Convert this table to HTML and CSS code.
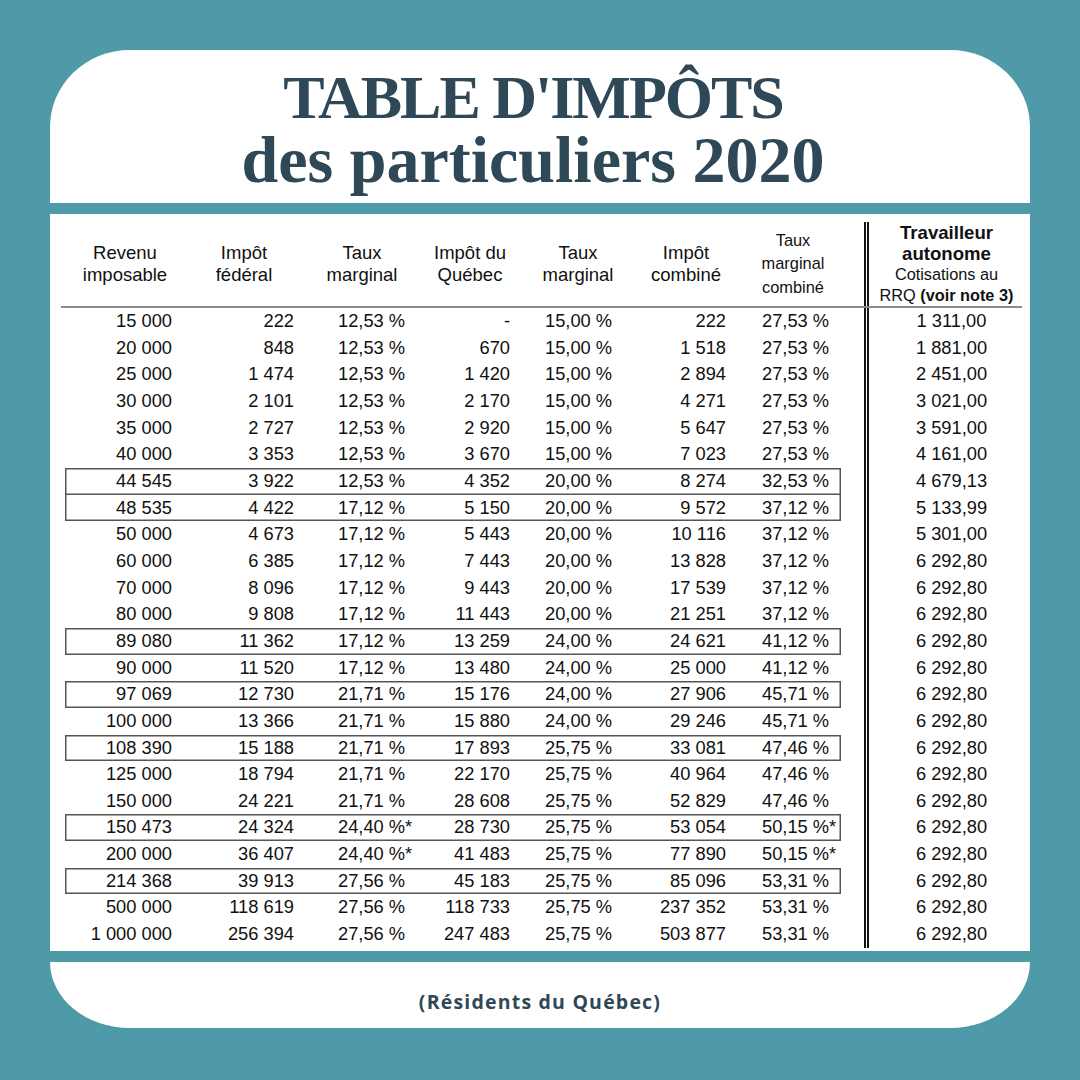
FILE: index.html
```html
<!DOCTYPE html>
<html lang="fr">
<head>
<meta charset="utf-8">
<title>Table d'impôts des particuliers 2020</title>
<link rel="stylesheet" href="styles.css">
</head>
<body>
<div class="page">
  <header class="title-card">
    <h1 class="title">
      <span class="title-l1">TABLE D'IMPÔTS</span>
      <span class="title-l2">des particuliers 2020</span>
    </h1>
  </header>

  <section class="sheet">
    <div class="tbl">
      <div class="row head">
        <div class="main">
          <div class="h c1"><span>Revenu</span><span>imposable</span></div>
          <div class="h c2"><span>Impôt</span><span>fédéral</span></div>
          <div class="h c3"><span>Taux</span><span>marginal</span></div>
          <div class="h c4"><span>Impôt du</span><span>Québec</span></div>
          <div class="h c5"><span>Taux</span><span>marginal</span></div>
          <div class="h c6"><span>Impôt</span><span>combiné</span></div>
          <div class="h c7 small"><span>Taux</span><span>marginal</span><span>combiné</span></div>
        </div>
        <div class="sep"></div>
        <div class="h c8 autonome">
          <span class="b">Travailleur</span>
          <span class="b">autonome</span>
          <span class="s">Cotisations au</span>
          <span class="s">RRQ <b>(voir note 3)</b></span>
        </div>
      </div>

      <div class="row"><div class="main"><div class="d c1">15 000</div><div class="d c2">222</div><div class="d c3">12,53 %</div><div class="d c4">-</div><div class="d c5">15,00 %</div><div class="d c6">222</div><div class="d c7">27,53 %</div></div><div class="sep"></div><div class="d c8">1 311,00</div></div>
      <div class="row"><div class="main"><div class="d c1">20 000</div><div class="d c2">848</div><div class="d c3">12,53 %</div><div class="d c4">670</div><div class="d c5">15,00 %</div><div class="d c6">1 518</div><div class="d c7">27,53 %</div></div><div class="sep"></div><div class="d c8">1 881,00</div></div>
      <div class="row"><div class="main"><div class="d c1">25 000</div><div class="d c2">1 474</div><div class="d c3">12,53 %</div><div class="d c4">1 420</div><div class="d c5">15,00 %</div><div class="d c6">2 894</div><div class="d c7">27,53 %</div></div><div class="sep"></div><div class="d c8">2 451,00</div></div>
      <div class="row"><div class="main"><div class="d c1">30 000</div><div class="d c2">2 101</div><div class="d c3">12,53 %</div><div class="d c4">2 170</div><div class="d c5">15,00 %</div><div class="d c6">4 271</div><div class="d c7">27,53 %</div></div><div class="sep"></div><div class="d c8">3 021,00</div></div>
      <div class="row"><div class="main"><div class="d c1">35 000</div><div class="d c2">2 727</div><div class="d c3">12,53 %</div><div class="d c4">2 920</div><div class="d c5">15,00 %</div><div class="d c6">5 647</div><div class="d c7">27,53 %</div></div><div class="sep"></div><div class="d c8">3 591,00</div></div>
      <div class="row"><div class="main"><div class="d c1">40 000</div><div class="d c2">3 353</div><div class="d c3">12,53 %</div><div class="d c4">3 670</div><div class="d c5">15,00 %</div><div class="d c6">7 023</div><div class="d c7">27,53 %</div></div><div class="sep"></div><div class="d c8">4 161,00</div></div>
      <div class="row box"><div class="main"><div class="d c1">44 545</div><div class="d c2">3 922</div><div class="d c3">12,53 %</div><div class="d c4">4 352</div><div class="d c5">20,00 %</div><div class="d c6">8 274</div><div class="d c7">32,53 %</div></div><div class="sep"></div><div class="d c8">4 679,13</div></div>
      <div class="row box"><div class="main"><div class="d c1">48 535</div><div class="d c2">4 422</div><div class="d c3">17,12 %</div><div class="d c4">5 150</div><div class="d c5">20,00 %</div><div class="d c6">9 572</div><div class="d c7">37,12 %</div></div><div class="sep"></div><div class="d c8">5 133,99</div></div>
      <div class="row"><div class="main"><div class="d c1">50 000</div><div class="d c2">4 673</div><div class="d c3">17,12 %</div><div class="d c4">5 443</div><div class="d c5">20,00 %</div><div class="d c6">10 116</div><div class="d c7">37,12 %</div></div><div class="sep"></div><div class="d c8">5 301,00</div></div>
      <div class="row"><div class="main"><div class="d c1">60 000</div><div class="d c2">6 385</div><div class="d c3">17,12 %</div><div class="d c4">7 443</div><div class="d c5">20,00 %</div><div class="d c6">13 828</div><div class="d c7">37,12 %</div></div><div class="sep"></div><div class="d c8">6 292,80</div></div>
      <div class="row"><div class="main"><div class="d c1">70 000</div><div class="d c2">8 096</div><div class="d c3">17,12 %</div><div class="d c4">9 443</div><div class="d c5">20,00 %</div><div class="d c6">17 539</div><div class="d c7">37,12 %</div></div><div class="sep"></div><div class="d c8">6 292,80</div></div>
      <div class="row"><div class="main"><div class="d c1">80 000</div><div class="d c2">9 808</div><div class="d c3">17,12 %</div><div class="d c4">11 443</div><div class="d c5">20,00 %</div><div class="d c6">21 251</div><div class="d c7">37,12 %</div></div><div class="sep"></div><div class="d c8">6 292,80</div></div>
      <div class="row box"><div class="main"><div class="d c1">89 080</div><div class="d c2">11 362</div><div class="d c3">17,12 %</div><div class="d c4">13 259</div><div class="d c5">24,00 %</div><div class="d c6">24 621</div><div class="d c7">41,12 %</div></div><div class="sep"></div><div class="d c8">6 292,80</div></div>
      <div class="row"><div class="main"><div class="d c1">90 000</div><div class="d c2">11 520</div><div class="d c3">17,12 %</div><div class="d c4">13 480</div><div class="d c5">24,00 %</div><div class="d c6">25 000</div><div class="d c7">41,12 %</div></div><div class="sep"></div><div class="d c8">6 292,80</div></div>
      <div class="row box"><div class="main"><div class="d c1">97 069</div><div class="d c2">12 730</div><div class="d c3">21,71 %</div><div class="d c4">15 176</div><div class="d c5">24,00 %</div><div class="d c6">27 906</div><div class="d c7">45,71 %</div></div><div class="sep"></div><div class="d c8">6 292,80</div></div>
      <div class="row"><div class="main"><div class="d c1">100 000</div><div class="d c2">13 366</div><div class="d c3">21,71 %</div><div class="d c4">15 880</div><div class="d c5">24,00 %</div><div class="d c6">29 246</div><div class="d c7">45,71 %</div></div><div class="sep"></div><div class="d c8">6 292,80</div></div>
      <div class="row box"><div class="main"><div class="d c1">108 390</div><div class="d c2">15 188</div><div class="d c3">21,71 %</div><div class="d c4">17 893</div><div class="d c5">25,75 %</div><div class="d c6">33 081</div><div class="d c7">47,46 %</div></div><div class="sep"></div><div class="d c8">6 292,80</div></div>
      <div class="row"><div class="main"><div class="d c1">125 000</div><div class="d c2">18 794</div><div class="d c3">21,71 %</div><div class="d c4">22 170</div><div class="d c5">25,75 %</div><div class="d c6">40 964</div><div class="d c7">47,46 %</div></div><div class="sep"></div><div class="d c8">6 292,80</div></div>
      <div class="row"><div class="main"><div class="d c1">150 000</div><div class="d c2">24 221</div><div class="d c3">21,71 %</div><div class="d c4">28 608</div><div class="d c5">25,75 %</div><div class="d c6">52 829</div><div class="d c7">47,46 %</div></div><div class="sep"></div><div class="d c8">6 292,80</div></div>
      <div class="row box"><div class="main"><div class="d c1">150 473</div><div class="d c2">24 324</div><div class="d c3">24,40 %*</div><div class="d c4">28 730</div><div class="d c5">25,75 %</div><div class="d c6">53 054</div><div class="d c7">50,15 %*</div></div><div class="sep"></div><div class="d c8">6 292,80</div></div>
      <div class="row"><div class="main"><div class="d c1">200 000</div><div class="d c2">36 407</div><div class="d c3">24,40 %*</div><div class="d c4">41 483</div><div class="d c5">25,75 %</div><div class="d c6">77 890</div><div class="d c7">50,15 %*</div></div><div class="sep"></div><div class="d c8">6 292,80</div></div>
      <div class="row box"><div class="main"><div class="d c1">214 368</div><div class="d c2">39 913</div><div class="d c3">27,56 %</div><div class="d c4">45 183</div><div class="d c5">25,75 %</div><div class="d c6">85 096</div><div class="d c7">53,31 %</div></div><div class="sep"></div><div class="d c8">6 292,80</div></div>
      <div class="row"><div class="main"><div class="d c1">500 000</div><div class="d c2">118 619</div><div class="d c3">27,56 %</div><div class="d c4">118 733</div><div class="d c5">25,75 %</div><div class="d c6">237 352</div><div class="d c7">53,31 %</div></div><div class="sep"></div><div class="d c8">6 292,80</div></div>
      <div class="row last"><div class="main"><div class="d c1">1 000 000</div><div class="d c2">256 394</div><div class="d c3">27,56 %</div><div class="d c4">247 483</div><div class="d c5">25,75 %</div><div class="d c6">503 877</div><div class="d c7">53,31 %</div></div><div class="sep"></div><div class="d c8">6 292,80</div></div>
    </div>
  </section>

  <footer class="foot-card">
    <p class="foot-text">(Résidents du Québec)</p>
  </footer>
</div>
</body>
</html>
```

FILE: styles.css
```css
* {
  box-sizing: border-box;
}

html, body {
  margin: 0;
  padding: 0;
}

body {
  width: 1080px;
  height: 1080px;
  background: #4f9aa8;
  overflow: hidden;
}

.page {
  padding: 50px 50px 0 50px;
  display: flex;
  flex-direction: column;
  gap: 11px;
}

/* ---------- title card ---------- */
.title-card {
  height: 153px;
  background: #ffffff;
  border-radius: 80px 80px 0 0 / 77px 77px 0 0;
  padding: 15px 14px 0 0;
}

.title {
  margin: 0;
  text-align: center;
  font-family: "Liberation Serif", "Times New Roman", serif;
  font-weight: 700;
  color: #2f4858;
}

.title-l1 {
  display: block;
  font-size: 62px;
  line-height: 64px;
  letter-spacing: -2px;
}

.title-l2 {
  display: block;
  font-size: 66px;
  line-height: 62px;
}

/* ---------- table sheet ---------- */
.sheet {
  height: 737px;
  background: #ffffff;
  padding: 8px 0 0 15px;
  font-family: "Liberation Sans", Arial, sans-serif;
  color: #111111;
}

.tbl {
  display: flex;
  flex-direction: column;
  width: 957px;
}

.row {
  display: flex;
  height: 26.67px;
}

.row.head {
  height: 86px;
  margin-left: -4px;
  padding-left: 4px;
  width: 961px;
  border-bottom: 2px solid #8c8c8c;
}

.main {
  display: flex;
  width: 776px;
  flex: none;
}

.sep {
  width: 28px;
  flex: none;
  border-right: 5px double #111111;
}

.row.box .main {
  box-shadow: inset 0 0 0 1.5px #555555;
}

.row.box + .row.box .main {
  box-shadow: inset 1.5px 0 0 #555555, inset -1.5px 0 0 #555555, inset 0 -1.5px 0 #555555;
}

.c1 { width: 120px; }
.c2 { width: 118px; }
.c3 { width: 113px; }
.c4 { width: 108px; }
.c5 { width: 108px; }
.c6 { width: 108px; }
.c7 { width: 101px; }
.c8 { width: 153px; flex: none; }

/* header cells */
.h {
  display: flex;
  flex-direction: column;
  justify-content: center;
  align-items: center;
  font-size: 18.5px;
  line-height: 22.5px;
  text-align: center;
  white-space: nowrap;
}

.h.c3 { padding-left: 5px; }
.h.c7 { padding-left: 5px; }

.h.small {
  font-size: 16.4px;
  line-height: 23.5px;
}

.h.autonome {
  line-height: 21px;
  padding-left: 2px;
}

.h.autonome .b {
  font-weight: 700;
  font-size: 18.6px;
}

.h.autonome .s {
  font-size: 16.3px;
}

.h.autonome b {
  font-weight: 700;
}

/* data cells */
.d {
  font-size: 18.3px;
  line-height: 26.67px;
  white-space: nowrap;
}

.d.c1 { text-align: right; padding-right: 13px; }
.d.c2 { text-align: right; padding-right: 9px; }
.d.c3 { text-align: left; padding-left: 35px; }
.d.c4 { text-align: right; padding-right: 14px; }
.d.c5 { text-align: left; padding-left: 21px; }
.d.c6 { text-align: right; padding-right: 14px; }
.d.c7 { text-align: left; padding-left: 22px; }
.d.c8 { text-align: center; padding-left: 12px; }

/* ---------- footer card ---------- */
.foot-card {
  height: 66px;
  background: #ffffff;
  border-radius: 0 0 80px 80px / 0 0 66px 66px;
  padding-top: 27px;
}

.foot-text {
  margin: 0;
  text-align: center;
  font-family: "Open Sans", "Liberation Sans", sans-serif;
  font-weight: 700;
  font-size: 19.5px;
  line-height: 26px;
  letter-spacing: 1.2px;
  color: #2f4858;
}
```
